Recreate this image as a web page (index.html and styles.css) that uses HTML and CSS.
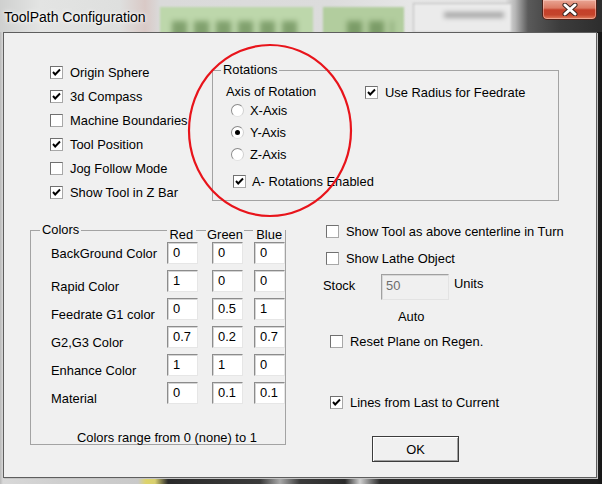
FILE: index.html
```html
<!DOCTYPE html>
<html>
<head>
<meta charset="utf-8">
<title>ToolPath Configuration</title>
<link rel="stylesheet" href="styles.css">
</head>
<body>
<div class="window">
  <div class="titlebar">
    <div class="backdrop" aria-hidden="true">
      <div class="bd-green1"><div class="digits d1"></div></div>
      <div class="bd-green2"><div class="digits d2"></div></div>
      <div class="bd-light"><div class="ghost-bar"></div></div>
    </div>
    <span class="title">ToolPath Configuration</span>
    <div class="close">
      <svg width="16" height="13" viewBox="0 0 16 13"><path d="M3 2 L13 11 M13 2 L3 11" stroke="#3b2520" stroke-width="5" stroke-linecap="round"/><path d="M3 2 L13 11 M13 2 L3 11" stroke="#ffffff" stroke-width="3" stroke-linecap="round"/></svg>
    </div>
  </div>

  <div class="client">
    <div class="top">
      <div class="checklist">
        <div class="ck"><span class="box on"><svg width="11" height="11" viewBox="0 0 11 11"><path d="M2 5 L4.2 7.5 L9 2.5" stroke="#000" stroke-width="1.9" fill="none"/></svg></span><span>Origin Sphere</span></div>
        <div class="ck"><span class="box on"><svg width="11" height="11" viewBox="0 0 11 11"><path d="M2 5 L4.2 7.5 L9 2.5" stroke="#000" stroke-width="1.9" fill="none"/></svg></span><span>3d Compass</span></div>
        <div class="ck"><span class="box"></span><span>Machine Boundaries</span></div>
        <div class="ck"><span class="box on"><svg width="11" height="11" viewBox="0 0 11 11"><path d="M2 5 L4.2 7.5 L9 2.5" stroke="#000" stroke-width="1.9" fill="none"/></svg></span><span>Tool Position</span></div>
        <div class="ck"><span class="box"></span><span>Jog Follow Mode</span></div>
        <div class="ck"><span class="box on"><svg width="11" height="11" viewBox="0 0 11 11"><path d="M2 5 L4.2 7.5 L9 2.5" stroke="#000" stroke-width="1.9" fill="none"/></svg></span><span>Show Tool in Z Bar</span></div>
      </div>

      <div class="group rot">
        <span class="legend">Rotations</span>
        <div class="rot-body">
          <div class="axis">
            <div class="axis-title">Axis of Rotation</div>
            <div class="radio-row first"><span class="radio"></span><span>X-Axis</span></div>
            <div class="radio-row"><span class="radio on"></span><span>Y-Axis</span></div>
            <div class="radio-row"><span class="radio"></span><span>Z-Axis</span></div>
            <div class="ck a-rot"><span class="box on"><svg width="11" height="11" viewBox="0 0 11 11"><path d="M2 5 L4.2 7.5 L9 2.5" stroke="#000" stroke-width="1.9" fill="none"/></svg></span><span>A- Rotations Enabled</span></div>
          </div>
          <div class="ck use-radius"><span class="box on"><svg width="11" height="11" viewBox="0 0 11 11"><path d="M2 5 L4.2 7.5 L9 2.5" stroke="#000" stroke-width="1.9" fill="none"/></svg></span><span>Use Radius for Feedrate</span></div>
        </div>
      </div>
    </div>

    <div class="bottom">
      <div class="group colors">
        <span class="legend">Colors</span>
        <div class="hdr">
          <span class="h-red">Red</span>
          <span class="h-green">Green</span>
          <span class="h-blue">Blue</span>
        </div>
        <div class="crow first"><span class="clabel">BackGround Color</span><span class="in">0</span><span class="in g">0</span><span class="in b">0</span></div>
        <div class="crow"><span class="clabel">Rapid Color</span><span class="in">1</span><span class="in g">0</span><span class="in b">0</span></div>
        <div class="crow"><span class="clabel">Feedrate G1 color</span><span class="in">0</span><span class="in g">0.5</span><span class="in b">1</span></div>
        <div class="crow"><span class="clabel">G2,G3 Color</span><span class="in">0.7</span><span class="in g">0.2</span><span class="in b">0.7</span></div>
        <div class="crow"><span class="clabel">Enhance Color</span><span class="in">1</span><span class="in g">1</span><span class="in b">0</span></div>
        <div class="crow"><span class="clabel">Material</span><span class="in">0</span><span class="in g">0.1</span><span class="in b">0.1</span></div>
        <div class="foot">Colors range from 0 (none) to 1</div>
      </div>

      <div class="right">
        <div class="ck r1"><span class="box"></span><span>Show Tool as above centerline in Turn</span></div>
        <div class="ck r2"><span class="box"></span><span>Show Lathe Object</span></div>
        <div class="stock">
          <span class="stock-l">Stock</span>
          <span class="stock-in">50</span>
          <span class="units">Units</span>
        </div>
        <div class="auto">Auto</div>
        <div class="ck reset"><span class="box"></span><span>Reset Plane on Regen.</span></div>
        <div class="ck lines"><span class="box on"><svg width="11" height="11" viewBox="0 0 11 11"><path d="M2 5 L4.2 7.5 L9 2.5" stroke="#000" stroke-width="1.9" fill="none"/></svg></span><span>Lines from Last to Current</span></div>
        <div class="ok">OK</div>
      </div>
    </div>
  </div>

  <svg class="mark" width="602" height="484" viewBox="0 0 602 484"><ellipse cx="270" cy="130.5" rx="81" ry="85.5" fill="none" stroke="#e8141b" stroke-width="2.2"/></svg>
</div>
</body>
</html>
```

FILE: styles.css
```css
* { box-sizing: border-box; }
html, body { margin: 0; padding: 0; }
body {
  width: 602px;
  height: 484px;
  overflow: hidden;
  background: #1b1b1b;
  font-family: "Liberation Sans", Arial, sans-serif;
  font-size: 12.9px;
  color: #000;
}

.window {
  position: relative;
  width: 602px;
  height: 484px;
  background: linear-gradient(to right, #b9b9b9 0, #d8d8d8 3px, #cfcfcf 60px, #c9c9c9 138px, #ddd36a 146px, #d8cf70 155px, #2a2a2a 168px, #3a3a3a 260px, #a8a8a8 280px, #3a3a3a 300px, #2b2b2b 345px, #cfcfcf 360px, #2c2c2c 380px, #1e1e1e 597px, #161616 602px);
}

/* ---------- title bar ---------- */
.titlebar {
  position: relative;
  height: 32px;
  display: flex;
  align-items: flex-start;
  overflow: hidden;
  background: linear-gradient(to right, #cfd0cf 0, #e3e4e3 40px, #dedfde 120px, #d9c9c6 145px, #dadada 160px, #dcdcdc 330px, #e6e6e6 410px, #e2e2e2 505px, #b8b8b8 515px, #5a5a5a 528px, #3c3c3c 560px, #2d2d2d 602px);
}
.backdrop { position: absolute; inset: 0; }
.bd-green1, .bd-green2, .bd-light {
  position: absolute;
  top: 7px;
  height: 30px;
  overflow: hidden;
  filter: blur(1.2px);
}
.bd-green1 { left: 160px; width: 153px; background: #bdd7ab; }
.bd-green2 { left: 323px; width: 81px; background: #b2cd9e; }
.bd-light { left: 413px; width: 99px; top: 3px; background: #ebebeb; border: 1px solid #bcbcbc; }
.digits {
  position: absolute;
  top: 14px;
  height: 20px;
  filter: blur(2.5px);
  background: repeating-linear-gradient(to right, rgba(70, 108, 50, 0.5) 0 15px, transparent 15px 22px);
}
.d1 { left: 12px; width: 126px; }
.d2 { left: 24px; width: 46px; }
.ghost-bar { position: absolute; left: 30px; top: 8px; width: 60px; height: 6px; background: rgba(90, 90, 90, 0.45); filter: blur(2px); }

.title {
  position: relative;
  margin-left: 4px;
  margin-top: 9px;
  font-size: 14px;
  line-height: 16px;
  color: #000;
  text-shadow: 0 0 6px #fff, 0 0 3px #fff;
}
.close {
  position: relative;
  margin-left: auto;
  margin-right: 5px;
  width: 55px;
  height: 20px;
  border: 1px solid #4d2119;
  border-top: none;
  border-radius: 0 0 5px 5px;
  background: linear-gradient(#e9a594 0, #dc7b64 42%, #c5402a 52%, #c4442c 78%, #e27f5f 100%);
  box-shadow: inset 0 0 0 1px rgba(255, 220, 210, 0.45);
  display: flex;
  align-items: center;
  justify-content: center;
}

/* ---------- client area ---------- */
.client {
  margin-left: 3px;
  width: 594px;
  height: 446px;
  border: 1px solid #5e5e5e;
  background: #f0f0f0;
  box-shadow: 1px 1px 0 #c4c4c4;
}

.ck {
  display: flex;
  align-items: center;
  height: 24px;
  gap: 7px;
  white-space: nowrap;
}
.box {
  flex: none;
  width: 13px;
  height: 13px;
  background: #fff;
  border: 1px solid;
  border-color: #707070 #a8a8a8 #a8a8a8 #707070;
  display: flex;
  align-items: center;
  justify-content: center;
}
.box svg { display: block; }

.radio {
  flex: none;
  width: 13px;
  height: 13px;
  border-radius: 50%;
  background: #fff;
  border: 1px solid;
  border-color: #8a8a8a #d0d0d0 #e2e2e2 #8a8a8a;
  display: flex;
  align-items: center;
  justify-content: center;
}
.radio.on::after {
  content: "";
  width: 5px;
  height: 5px;
  border-radius: 50%;
  background: #000;
}

.group {
  position: relative;
  border: 1px solid #a3a3a3;
}
.legend {
  position: absolute;
  top: -9px;
  left: 8px;
  padding: 0 2px;
  line-height: 15px;
  background: #f0f0f0;
}
.colors .legend { left: 9px; }

/* top */
.top {
  display: flex;
  align-items: flex-start;
  padding-left: 46px;
}
.checklist {
  width: 162px;
  margin-top: 27px;
  display: flex;
  flex-direction: column;
}
.rot {
  margin-top: 37px;
  width: 347px;
  height: 131px;
}
.rot-body {
  display: flex;
  align-items: flex-start;
  padding-left: 13px;
}
.axis {
  width: 139px;
  display: flex;
  flex-direction: column;
}
.axis-title { margin-top: 13px; line-height: 15px; }
.radio-row {
  display: flex;
  align-items: center;
  gap: 6px;
  height: 22px;
  margin-left: 5px;
}
.a-rot { margin-top: 4px; margin-left: 7px; gap: 6px; }
.use-radius { margin-top: 9px; }

/* bottom */
.bottom {
  display: flex;
  align-items: flex-start;
  padding-left: 26px;
  margin-top: 15px;
}
.colors {
  margin-top: 11px;
  width: 256px;
  height: 215px;
  padding-left: 20px;
}
.hdr {
  display: flex;
  height: 15px;
  margin-top: -4px;
  line-height: 15px;
}
.hdr span { background: #f0f0f0; text-align: center; }
.h-red { margin-left: 116px; width: 29px; }
.h-green { margin-left: 10px; width: 39px; }
.h-blue { margin-left: 9px; width: 32px; }

.crow {
  display: flex;
  align-items: flex-start;
  height: 22px;
  margin-top: 6px;
}
.crow.first { margin-top: 0; }
.clabel {
  width: 116px;
  line-height: 15px;
  margin-top: 8.5px;
  white-space: nowrap;
}
.crow.first .clabel { margin-top: 3.5px; }
.in {
  width: 31px;
  height: 22px;
  background: #fff;
  border: 1px solid;
  border-color: #8c8c8c #e6e6e6 #e6e6e6 #8c8c8c;
  box-shadow: inset 1px 1px 0 #d4d4d4;
  padding-left: 5px;
  line-height: 19px;
}
.in.g { margin-left: 14px; }
.in.b { margin-left: 11px; }
.foot {
  margin-top: 25.5px;
  margin-left: 26px;
  line-height: 15px;
  white-space: nowrap;
}

.right {
  margin-left: 37px;
  display: flex;
  flex-direction: column;
}
.r1 { margin-left: 3px; }
.r2 { margin-left: 3px; margin-top: 3px; }
.stock {
  display: flex;
  align-items: flex-start;
  margin-top: 4px;
  height: 26px;
}
.stock-l { width: 58px; margin-top: 3.5px; line-height: 15px; }
.stock-in {
  width: 68px;
  height: 26px;
  background: #f0f0f0;
  border: 1px solid;
  border-color: #a0a0a0 #e3e3e3 #e3e3e3 #a0a0a0;
  box-shadow: inset 1px 1px 0 #d8d8d8;
  padding-left: 4px;
  padding-top: 3px;
  line-height: 15px;
  color: #6d6d6d;
}
.units { margin-left: 5px; margin-top: 2px; line-height: 15px; }
.auto { margin-top: 8.5px; margin-left: 75px; line-height: 15px; }
.reset { margin-top: 5.5px; margin-left: 7px; }
.lines { margin-top: 37px; margin-left: 7px; }
.ok {
  margin-top: 22px;
  margin-left: 49px;
  width: 87px;
  height: 26px;
  border: 1px solid #3c3c3c;
  background: #f0f0f0;
  box-shadow: inset 1px 1px 0 #ffffff, inset -1px -1px 0 #a0a0a0;
  display: flex;
  align-items: center;
  justify-content: center;
}

.mark {
  position: absolute;
  left: 0;
  top: 0;
  pointer-events: none;
}
```
